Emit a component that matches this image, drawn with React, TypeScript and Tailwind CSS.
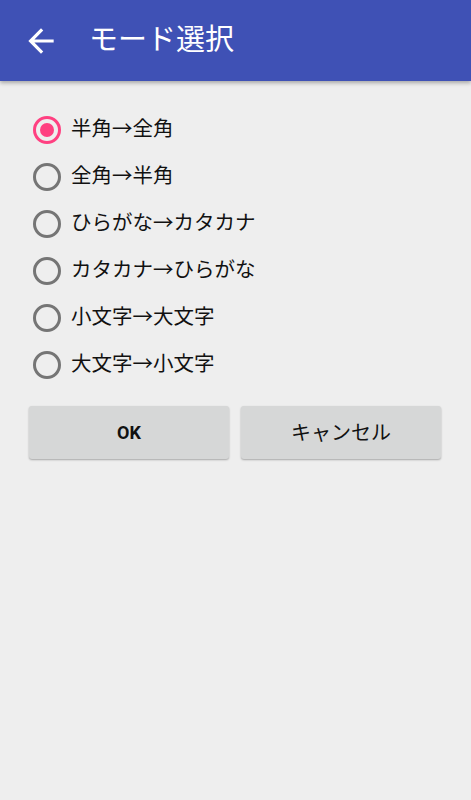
import { useState } from 'react';

const options = [
    '半角→全角',
    '全角→半角',
    'ひらがな→カタカナ',
    'カタカナ→ひらがな',
    '小文字→大文字',
    '大文字→小文字'
];

export default function App() {
    const [selected, setSelected] = useState(0);

    return (
        <div
            className="w-[471px] h-[800px] bg-[#eeeeee] flex flex-col"
            style={{ fontFamily: 'Roboto, "Noto Sans CJK JP", sans-serif' }}
        >
            {/* App bar */}
            <header className="h-[81px] bg-[#3f51b5] flex items-center shadow-[0_2px_4px_rgba(0,0,0,0.3)] relative z-10">
                <button className="w-[82px] h-full flex items-center justify-center">
                    <svg width="38" height="38" viewBox="0 0 24 24">
                        <path d="M20 11H7.83l5.59-5.59L12 4l-8 8 8 8 1.41-1.41L7.83 13H20v-2z" fill="#ffffff" />
                    </svg>
                </button>
                <h1 className="text-white text-[29px] leading-none ml-[7px]">モード選択</h1>
            </header>

            {/* Options */}
            <div className="pt-[25px] px-[33px] flex flex-col">
                {options.map((label, i) => (
                    <button
                        key={label}
                        onClick={() => setSelected(i)}
                        className="h-[47px] flex items-center gap-[10px] text-left"
                    >
                        <span
                            className={`w-[28px] h-[28px] rounded-full border-[3px] flex items-center justify-center ${i === selected ? 'border-[#ff4081]' : 'border-[#757575]'}`}
                        >
                            {i === selected && <span className="w-[14px] h-[14px] rounded-full bg-[#ff4081]" />}
                        </span>
                        <span className="text-[20.5px] text-[#111111]">{label}</span>
                    </button>
                ))}
            </div>

            {/* Buttons */}
            <div className="flex gap-[12px] px-[29px] mt-[18px]">
                <button className="w-[200px] h-[53px] rounded-[3px] bg-[#d6d7d7] shadow-[0_1px_2px_rgba(0,0,0,0.3)] text-[18px] font-bold text-[#111111]">
                    OK
                </button>
                <button className="w-[200px] h-[53px] rounded-[3px] bg-[#d6d7d7] shadow-[0_1px_2px_rgba(0,0,0,0.3)] text-[20px] text-[#111111]">
                    キャンセル
                </button>
            </div>
        </div>
    );
}
